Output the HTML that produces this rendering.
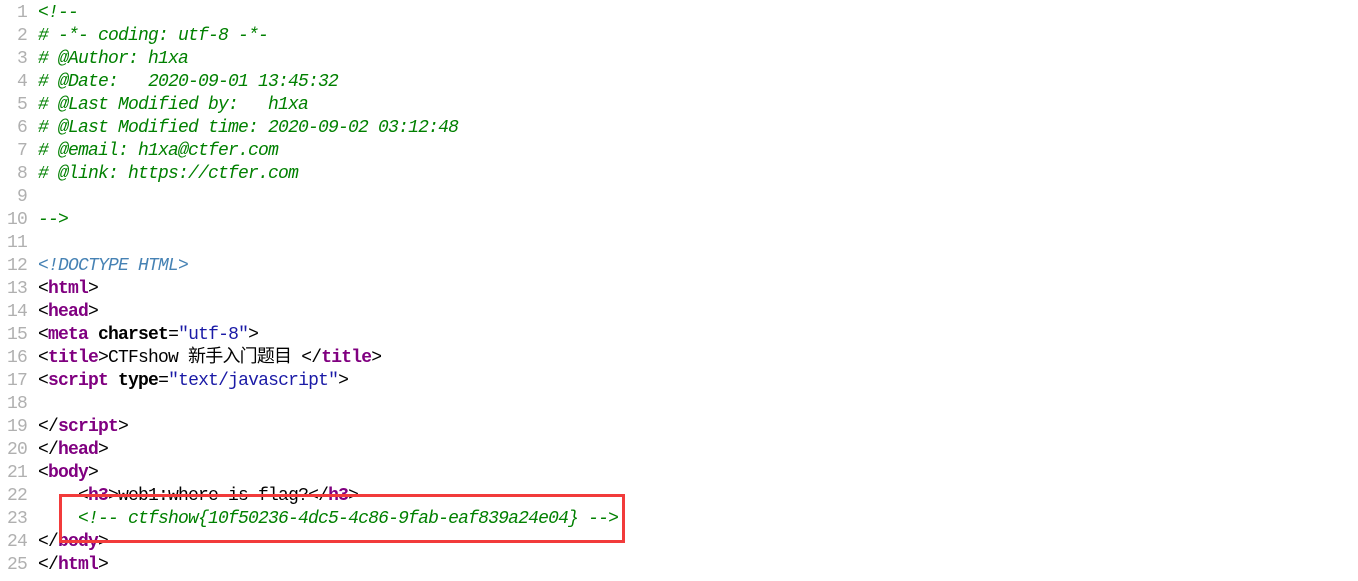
<!DOCTYPE html>
<html><head><meta charset="utf-8"><style>
body{margin:0;background:#fff;width:1358px;height:581px;overflow:hidden;position:relative}
.g,.c{position:absolute;top:2px;margin:0;font-family:"Liberation Mono","Noto Sans CJK SC",monospace;font-size:18px;letter-spacing:-0.8px;line-height:23px;white-space:pre}
.g{left:0;width:27px;text-align:right;color:#b0b0b0}
.c{left:38px;color:#000}
.cm{color:#008000;font-style:italic}
.dt{color:#4682b4;font-style:italic}
.t{color:#800080;font-weight:bold}
.a{font-weight:bold}
.v{color:#1a1aa6}
.box{position:absolute;left:59px;top:494px;width:560px;height:43px;border:3px solid #f23b3b}
</style></head><body>
<div class="g">1
2
3
4
5
6
7
8
9
10
11
12
13
14
15
16
17
18
19
20
21
22
23
24
25</div>
<div class="c"><span class="cm">&lt;!--
# -*- coding: utf-8 -*-
# @Author: h1xa
# @Date:   2020-09-01 13:45:32
# @Last Modified by:   h1xa
# @Last Modified time: 2020-09-02 03:12:48
# @email: h1xa@ctfer.com
# @link: https://ctfer.com

--&gt;</span>

<span class="dt">&lt;!DOCTYPE HTML&gt;</span>
&lt;<span class="t">html</span>&gt;
&lt;<span class="t">head</span>&gt;
&lt;<span class="t">meta</span> <span class="a">charset</span>=<span class="v">"utf-8"</span>&gt;
&lt;<span class="t">title</span>&gt;CTFshow 新手入门题目 &lt;/<span class="t">title</span>&gt;
&lt;<span class="t">script</span> <span class="a">type</span>=<span class="v">"text/javascript"</span>&gt;

&lt;/<span class="t">script</span>&gt;
&lt;/<span class="t">head</span>&gt;
&lt;<span class="t">body</span>&gt;
    &lt;<span class="t">h3</span>&gt;web1:where is flag?&lt;/<span class="t">h3</span>&gt;
    <span class="cm">&lt;!-- ctfshow{10f50236-4dc5-4c86-9fab-eaf839a24e04} --&gt;</span>
&lt;/<span class="t">body</span>&gt;
&lt;/<span class="t">html</span>&gt;</div>
<div class="box"></div>
</body></html>
